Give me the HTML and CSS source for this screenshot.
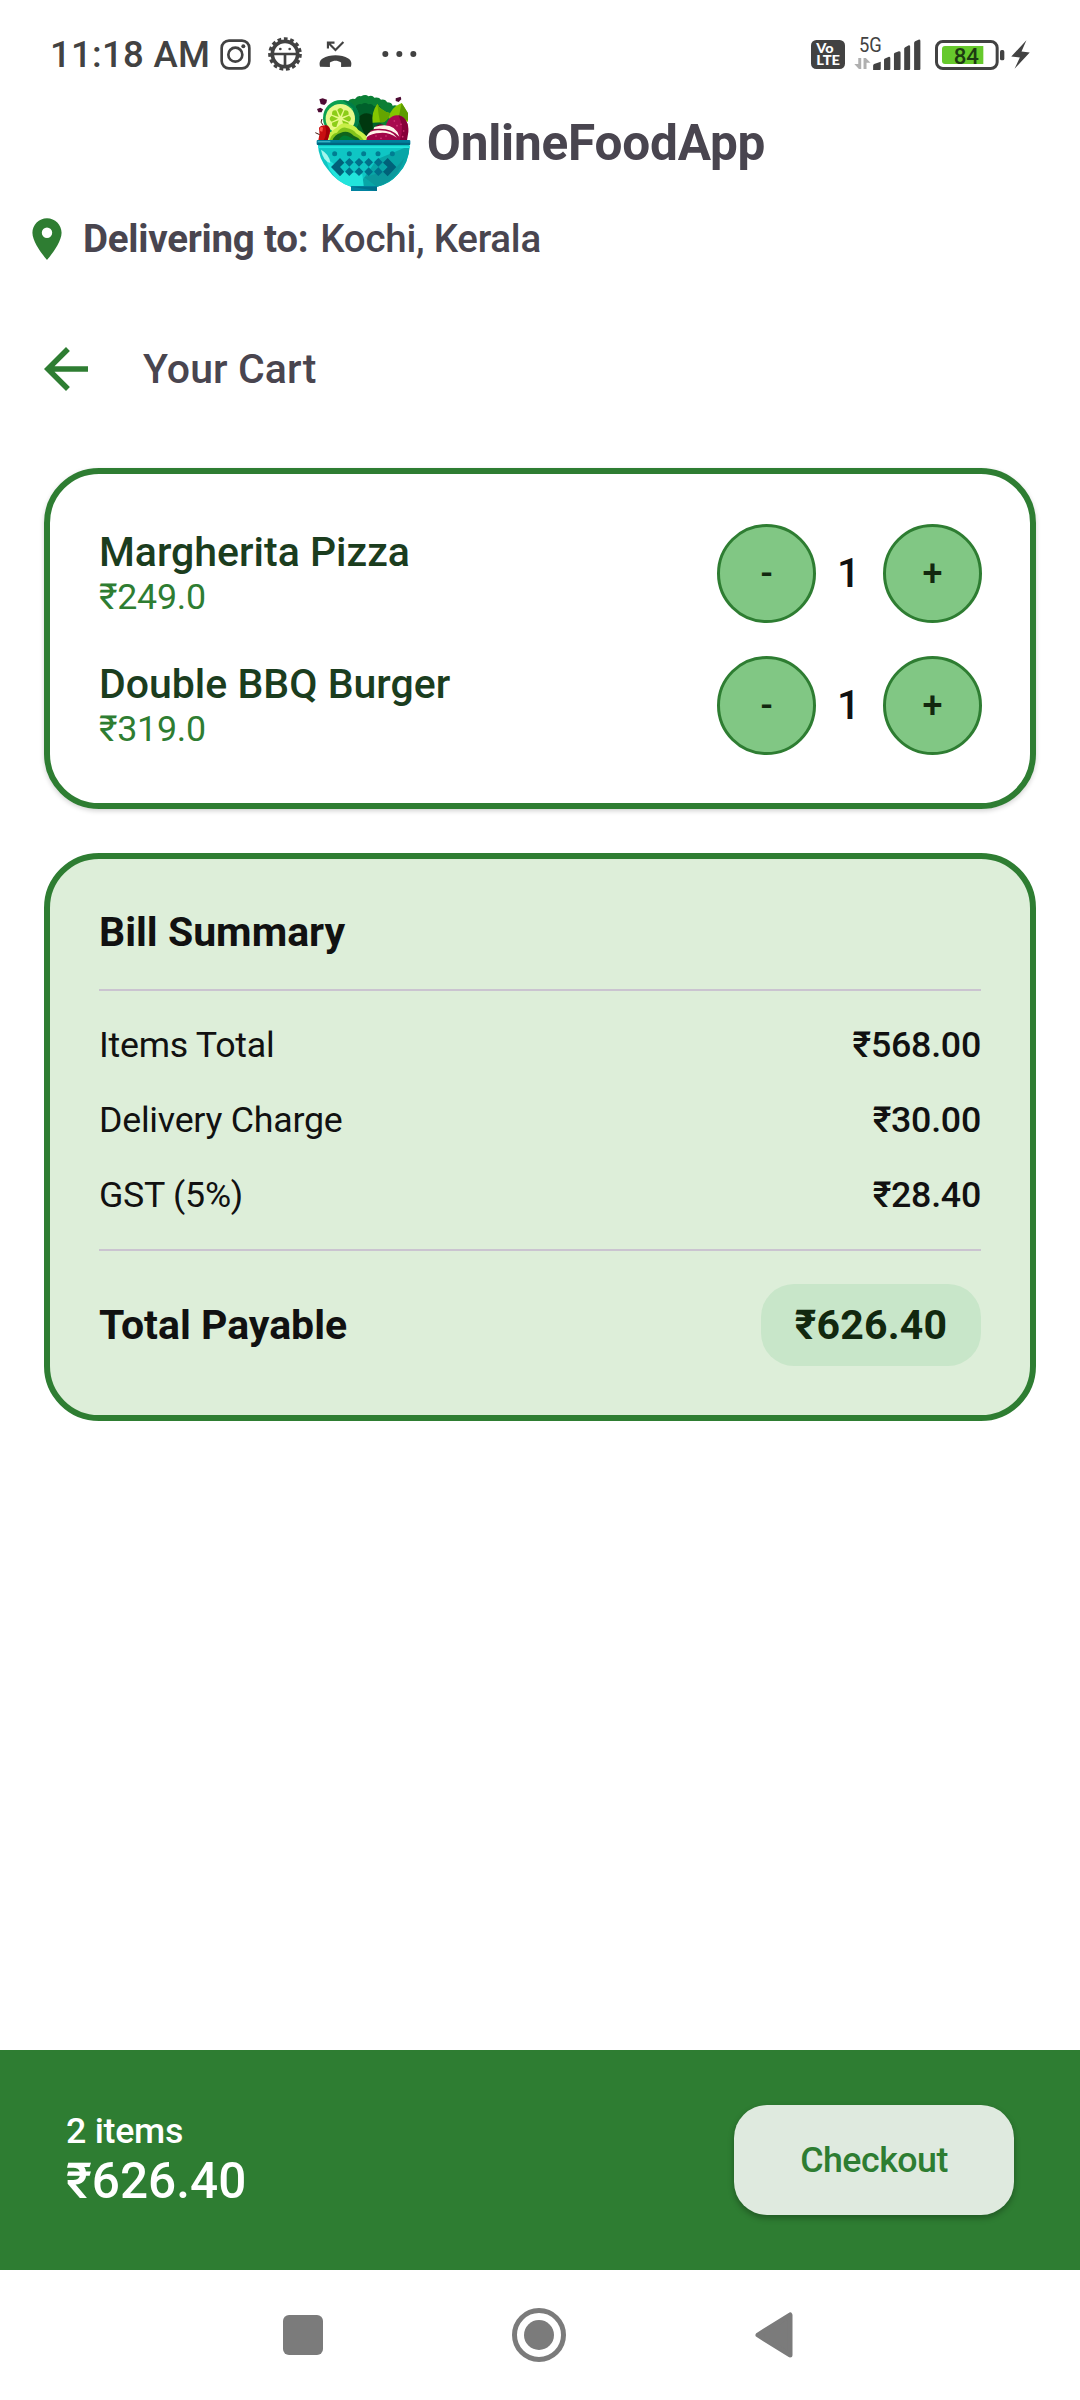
FILE: index.html
```html
<!DOCTYPE html>
<html lang="en">
<head>
<meta charset="utf-8">
<title>Your Cart</title>
<link rel="stylesheet" href="styles.css">
</head>
<body>
<div class="screen">
  <div class="status">
    <span class="clock">11:18 AM</span>
    <svg class="st-insta" viewBox="569 56 93 93"><g fill="none" stroke="#424242" stroke-width="8"><rect x="574" y="61" width="83" height="83" rx="22"/><circle cx="615" cy="103" r="21"/></g><circle cx="639" cy="78" r="6" fill="#424242"/></svg>
    <svg class="st-bug" viewBox="714 50 102 102"><circle cx="765" cy="101" r="38" fill="none" stroke="#424242" stroke-width="11"/><circle cx="765" cy="101" r="45" fill="none" stroke="#424242" stroke-width="11" stroke-dasharray="11 7.850"/><path d="M728 101h74M765 101v42" stroke="#424242" stroke-width="8"/><circle cx="751" cy="86" r="4" fill="#424242"/><circle cx="779" cy="86" r="4" fill="#424242"/></svg>
    <svg class="st-call" viewBox="866 61 98 82"><path d="M868 139c-3-12-1-19 8-25 22-13 56-13 78 0 9 6 11 13 8 25l-30 1v-14c-12-7-22-7-34 0v14z" fill="#424242"/><path d="M896 69l19 19 24-24M892 84V66h20" fill="none" stroke="#424242" stroke-width="6.500"/></svg>
    <svg class="st-dots" viewBox="1055 90 105 24" fill="#424242"><circle cx="1065" cy="102" r="9"/><circle cx="1107" cy="102" r="9"/><circle cx="1149" cy="102" r="9"/></svg>
    <svg class="st-volte" viewBox="63 60 102 87"><rect x="63" y="60" width="102" height="87" rx="16" fill="#424242"/><text x="79" y="98" class="volte-t" textLength="52" lengthAdjust="spacingAndGlyphs">Vo</text><text x="79" y="136" class="volte-t" textLength="71" lengthAdjust="spacingAndGlyphs">LTE</text></svg>
    <svg class="st-signal" viewBox="192 32 204 118"><text x="206" y="96" class="net-t" textLength="69" lengthAdjust="spacingAndGlyphs">5G</text><g fill="#b0b0b0"><path d="M204 114h9v33h-7l-14-15h12z"/><path d="M220 147v-33h7l14 14h-12v19z"/></g><g fill="#424242"><path d="M249 150v-13q0-3 3-5l20-7v22q0 3-3 3z"/><path d="M282 150v-31q0-3 3-4l12-5q4 0 4 4v33q0 3-3 3z"/><path d="M312 150v-48q0-3 3-4l12-5q5 0 5 4v50q0 3-3 3z"/><path d="M343 150v-64q0-3 3-5l11-6q4 0 4 4v68q0 3-3 3z"/><path d="M373 150v-82q0-3 3-5l12-5q4 0 4 4v85q0 3-3 3z"/></g></svg>
    <svg class="st-batt" viewBox="434 57 210 90"><rect x="438.500" y="61.500" width="182" height="81" rx="19" fill="#fff" stroke="#424242" stroke-width="9"/><path d="M464 75h115v54H464q-9 0-9-9V84q0-9 9-9z" fill="#66c92c"/><rect x="629" y="87" width="13" height="31" rx="5" fill="#424242"/><text x="490" y="128" class="batt-t" textLength="76" lengthAdjust="spacingAndGlyphs">84</text></svg>
    <svg class="st-bolt" viewBox="664 57 56 88"><path d="M710 58L664 107l26 3-16 34 46-49-25-3z" fill="#424242"/></svg>
  </div>

  <header class="brand">
    <svg class="logo" viewBox="42 30 288 288">
      <path d="M140 50q8-12 22-8q8-12 18-8q14-8 22 0q12-5 18 4q14-3 20 6q14-2 18 8q14 0 17 10q14-4 20 8l5 70-60 30H170z" fill="#0b7f35"/>
      <path d="M165 62q8-8 17-4q10-8 20 0q10-4 17 6l18 0 10 30-20 72h-62z" fill="#00602b"/>
      <path d="M170 100q20-24 44-10l2 50-18 26z" fill="#00380f"/>
      <circle cx="120" cy="99" r="54" fill="#0ca050"/><path d="M124 45a54 54 0 0 1 42 84l-10 0V70z" fill="#007d47"/>
      <circle cx="118" cy="101" r="44" fill="#e8f98a"/>
      <g fill="#8ccd18"><path d="M118 94l-9-19q9-12 18 0z"/><path d="M118 94l-9-19q9-12 18 0z" transform="rotate(45 118 101)"/><path d="M118 94l-9-19q9-12 18 0z" transform="rotate(90 118 101)"/><path d="M118 94l-9-19q9-12 18 0z" transform="rotate(135 118 101)"/><path d="M118 94l-9-19q9-12 18 0z" transform="rotate(225 118 101)"/><path d="M118 94l-9-19q9-12 18 0z" transform="rotate(270 118 101)"/><path d="M118 94l-9-19q9-12 18 0z" transform="rotate(315 118 101)"/></g>
      <path d="M82 166V147q14-12 27-20q15-18 32-10q24 5 31 18q20 10 34 31z" fill="#c9ef48"/>
      <path d="M86 166q4-20 22-23q12-17 26-15q25 5 31 17q16 8 24 21z" fill="#83c41b"/>
      <path d="M94 166q8-18 24-22q22-11 40 8q14 5 20 14z" fill="#11641b"/><path d="M113 166q10-20 28-12l24 12z" fill="#007c33"/>
      <path d="M215 113q-4-32 14-57 8 20 37 28-5 24-22 28z" fill="#83c600"/><path d="M229 56q3 30 8 56h12q16-10 17-28-28-8-37-28z" fill="#64a500"/>
      <path d="M262 100q6-32 40-46 8 12 19 32v24z" fill="#83c600"/><path d="M302 54l-10 48 29 4V84z" fill="#5c9c00"/>
      <path d="M222 126q12-14 30-4l-12 18-20-2z" fill="#7d0032"/>
      <ellipse cx="288" cy="132" rx="34" ry="41" fill="#a8094e"/><path d="M292 91q30 6 30 50l-4 25h-22q16-40-4-75z" fill="#860039"/>
      <path d="M196 166q2-28 26-35 40-10 68 18l6 17z" fill="#a00548"/>
      <path d="M196 154q10-20 38-18 40 0 54 22-26-17-51-14-24 0-42 14zM220 126q60-18 75 29-24-29-77-23z" fill="#fff3ea"/>
      <g fill="#d83b7b"><circle cx="280" cy="108" r="2.500"/><circle cx="300" cy="118" r="2.500"/><circle cx="288" cy="122" r="2.500"/><circle cx="308" cy="138" r="2.500"/><circle cx="225" cy="153" r="2.500"/><circle cx="240" cy="160" r="2.500"/><circle cx="255" cy="153" r="2.500"/><circle cx="305" cy="155" r="2.500"/></g>
      <path d="M54 128q6-11 26-6 10 8 6 22l-6 22H52q6-20 2-38z" fill="#c80f10"/><path d="M57 128q5-4 9 0l-2 12-7-2z" fill="#fb5548"/><path d="M72 120q18 2 14 24l-6 22h-12q12-20 4-46z" fill="#a20008"/>
      <path d="M66 120q-10-8-3-18M43 143l13 6" stroke="#42170d" stroke-width="3" fill="none"/>
      <g fill="#4d0a33"><path d="M55 43l10-3 13 4-2 10-6 6-11-3z"/><path d="M48 72l10-4 8 5-4 9h-10z"/><path d="M284 40l15-5 2 8-8 8-9-3z"/></g>
      <path d="M51 180H326q-2 52-35 88-27 31-63 37h-78q-44-14-70-52-28-34-29-73z" fill="#0fc6c4"/>
      <path d="M326 182q-2 52-35 86-27 31-63 37h-40l-2-22 42-60z" fill="#08a6a7"/>
      <path d="M86 254l-14-38 54 42 58 10 4 37h-38q-38-10-64-51z" fill="#22e4dc"/>
      <path d="M228 305l-38-28 94-28 26-30q-20 68-82 86z" fill="#0b989c"/>
      <path d="M51 184H326v5H52z" fill="#22e7df"/><path d="M60 194q26 14 28 40-22-6-28-40z" fill="#a2f7ee"/>
      <rect x="47" y="165" width="281" height="15" rx="3" fill="#007f9c"/><path d="M49 173h278v7H49z" fill="#00657f"/><path d="M50 168h38v4H50z" fill="#39b4c5"/>
      <g fill="#007d92"><circle cx="101" cy="206" r="7.500"/><circle cx="145" cy="206" r="7.500"/><circle cx="188" cy="206" r="7.500"/><circle cx="231" cy="206" r="7.500"/><circle cx="274" cy="206" r="7.500"/></g>
      <path d="M117 219l13 14-13 13 13 14-13 14-27-28zM260 219l-14 14 14 13-14 14 14 14 26-28z" fill="#006179"/>
      <g fill="#00708a"><path d="M145 219l13 13-13 13-13-13zM174 219l13 13-13 13-13-13zM203 219l13 13-13 13-13-13zM232 219l13 13-13 13-13-13zM145 247l13 13-13 13-13-13zM174 247l13 13-13 13-13-13zM203 247l13 13-13 13-13-13zM232 247l13 13-13 13-13-13z"/></g>
      <path d="M150 303h78v15h-78z" fill="#0083a0"/><path d="M150 305h78v13z" fill="#00708b"/>
    </svg>
    <span class="brand-name">OnlineFoodApp</span>
  </header>

  <div class="deliver">
    <svg class="pin" viewBox="0 0 24 24"><path fill="#2e7d32" d="M12 2C8.130 2 5 5.130 5 9c0 5.250 7 13 7 13s7-7.750 7-13c0-3.870-3.130-7-7-7zm0 9.500a2.500 2.500 0 0 1 0-5 2.500 2.500 0 0 1 0 5z"/></svg>
    <span class="deliver-label">Delivering to:</span>
    <span class="deliver-place">Kochi, Kerala</span>
  </div>

  <div class="titlebar">
    <svg class="back" viewBox="0 0 24 24"><path fill="#2e7d32" d="M20 11H7.830l5.590-5.590L12 4l-8 8 8 8 1.410-1.410L7.830 13H20v-2z"/></svg>
    <h1 class="title">Your Cart</h1>
  </div>

  <section class="card items">
    <div class="item">
      <div class="info"><div class="name">Margherita Pizza</div><div class="price">₹249.0</div></div>
      <div class="stepper"><button class="step">-</button><span class="qty">1</span><button class="step">+</button></div>
    </div>
    <div class="item">
      <div class="info"><div class="name">Double BBQ Burger</div><div class="price">₹319.0</div></div>
      <div class="stepper"><button class="step">-</button><span class="qty">1</span><button class="step">+</button></div>
    </div>
  </section>

  <section class="card bill">
    <h2 class="bill-title">Bill Summary</h2>
    <div class="rule"></div>
    <div class="row"><span>Items Total</span><span class="amount">₹568.00</span></div>
    <div class="row"><span>Delivery Charge</span><span class="amount">₹30.00</span></div>
    <div class="row"><span>GST (5%)</span><span class="amount">₹28.40</span></div>
    <div class="rule"></div>
    <div class="total"><span>Total Payable</span><span class="pill">₹626.40</span></div>
  </section>

  <footer class="checkout">
    <div><div class="count">2 items</div><div class="sum">₹626.40</div></div>
    <button class="cta">Checkout</button>
  </footer>

  <nav class="sysnav">
    <svg class="nav-recent" viewBox="0 0 40 40"><rect width="40" height="40" rx="6" fill="#7b7b7b"/></svg>
    <svg class="nav-home" viewBox="0 0 54 54"><circle cx="27" cy="27" r="24.500" fill="none" stroke="#7b7b7b" stroke-width="5"/><circle cx="27" cy="27" r="15" fill="#7b7b7b"/></svg>
    <svg class="nav-back" viewBox="0 0 38 46"><path d="M3 23L35 3v40z" fill="#7b7b7b" stroke="#7b7b7b" stroke-width="5" stroke-linejoin="round"/></svg>
  </nav>
</div>
</body>
</html>
```
FILE: styles.css
```css
* { box-sizing: border-box; }
body { margin: 0; background: #fff; font-family: Roboto, sans-serif; }
svg { display: block; flex: none; }
h1, h2 { margin: 0; }
button { font-family: inherit; padding: 0; border: 0; }
.screen { width: 1080px; height: 2400px; display: flex; flex-direction: column; color: #111; }

.status { height: 95px; padding: 15px 50px 0 50px; display: flex; align-items: center; color: #424242; }
.clock { font-size: 36.5px; font-weight: 500; line-height: 44px; width: 170px; white-space: nowrap; letter-spacing: 0.3px; }
.st-insta { width: 31px; height: 31px; margin-top: -2px; }
.st-bug { width: 34px; height: 34px; margin: -2px 0 0 17px; }
.st-call { width: 33px; height: 27px; margin: -1px 0 0 17px; }
.st-dots { width: 35px; height: 8px; margin: -2px auto 0 30px; }
.st-volte { width: 34px; height: 29px; margin-top: -1px; }
.st-signal { width: 68px; height: 39px; margin: -9px 0 0 9px; }
.st-batt { width: 70px; height: 30px; margin: -1px 0 0 13px; }
.st-bolt { width: 19px; height: 29px; margin: -1px 0 0 6px; }
.volte-t { font: 900 38px Lato, sans-serif; fill: #fff; }
.net-t { font: 400 60px Roboto, sans-serif; fill: #424242; }
.batt-t { font: 500 66px Roboto, sans-serif; fill: #1d3a12; }

.brand { height: 96px; display: flex; align-items: center; justify-content: center; gap: 16px; color: #49454f; }
.logo { width: 96px; height: 96px; }
.brand-name { font-size: 49.5px; font-weight: 700; line-height: 60px; letter-spacing: -0.2px; }

.deliver { height: 50px; margin-top: 23px; padding-left: 22px; display: flex; align-items: center; color: #49454f; font-size: 38.5px; line-height: 46px; letter-spacing: -0.25px; }
.pin { width: 50px; height: 50px; }
.deliver-label { margin-left: 11px; font-weight: 700; }
.deliver-place { margin-left: 12px; font-weight: 500; }

.titlebar { height: 66px; margin: 72px 0 66px; padding-left: 33px; display: flex; align-items: center; gap: 44px; color: #49454f; }
.back { width: 66px; height: 66px; }
.title { font-size: 41px; font-weight: 500; line-height: 48px; letter-spacing: 0.1px; }

.card { margin: 0 44px; border: 6px solid #2e7d32; border-radius: 55px; }
.items { height: 341px; padding: 50px 48px 48px 49px; display: flex; flex-direction: column; gap: 33px; box-shadow: 0 2px 5px rgba(0, 0, 0, 0.18); }
.item { height: 99px; display: flex; align-items: center; justify-content: space-between; }
.name { font-size: 41px; font-weight: 500; line-height: 47px; color: #1b3d1e; }
.price { font-size: 35.75px; line-height: 42px; letter-spacing: -0.25px; color: #2e7d32; }
.stepper { display: flex; align-items: center; }
.step { width: 99px; height: 99px; padding-top: 2px; border: 3px solid #2e7d32; border-radius: 50%; background: #81c784; color: #12280f; font-size: 36px; font-weight: 500; line-height: 91px; }
.qty { width: 67px; padding-right: 2px; text-align: center; font-size: 40.9px; font-weight: 500; line-height: 45px; }

.bill { height: 568px; margin-top: 44px; padding: 49px; background: #ddeed9; }
.bill-title { font-size: 41px; font-weight: 700; line-height: 48px; }
.rule { height: 2px; margin: 33px 0; background: #cac4d0; }
.row { display: flex; justify-content: space-between; font-size: 35.75px; line-height: 42px; letter-spacing: -0.25px; }
.row + .row { margin-top: 33px; }
.amount { font-weight: 500; }
.total { display: flex; align-items: center; justify-content: space-between; height: 82px; font-size: 41px; font-weight: 700; line-height: 48px; }
.pill { width: 220px; height: 82px; line-height: 82px; text-align: center; border-radius: 33px; background: #c8e6c9; color: #12280f; letter-spacing: 0.2px; }

.checkout { height: 220px; margin-top: auto; padding: 0 66px; display: flex; align-items: center; justify-content: space-between; background: #2e7d32; color: #fff; }
.count { font-size: 35.75px; font-weight: 500; line-height: 42px; letter-spacing: -0.25px; }
.sum { font-size: 49.5px; font-weight: 500; line-height: 58.6px; }
.cta { width: 280px; height: 110px; border-radius: 33px; background: #dfeadf; color: #2e7d32; font-size: 35.75px; font-weight: 500; letter-spacing: -0.5px; box-shadow: 0 3px 6px rgba(0, 0, 0, 0.3); }

.sysnav { height: 130px; display: flex; align-items: center; padding-left: 283px; }
.nav-recent { width: 40px; height: 40px; }
.nav-home { width: 54px; height: 54px; margin-left: 189px; }
.nav-back { width: 38px; height: 46px; margin-left: 189px; }
```
